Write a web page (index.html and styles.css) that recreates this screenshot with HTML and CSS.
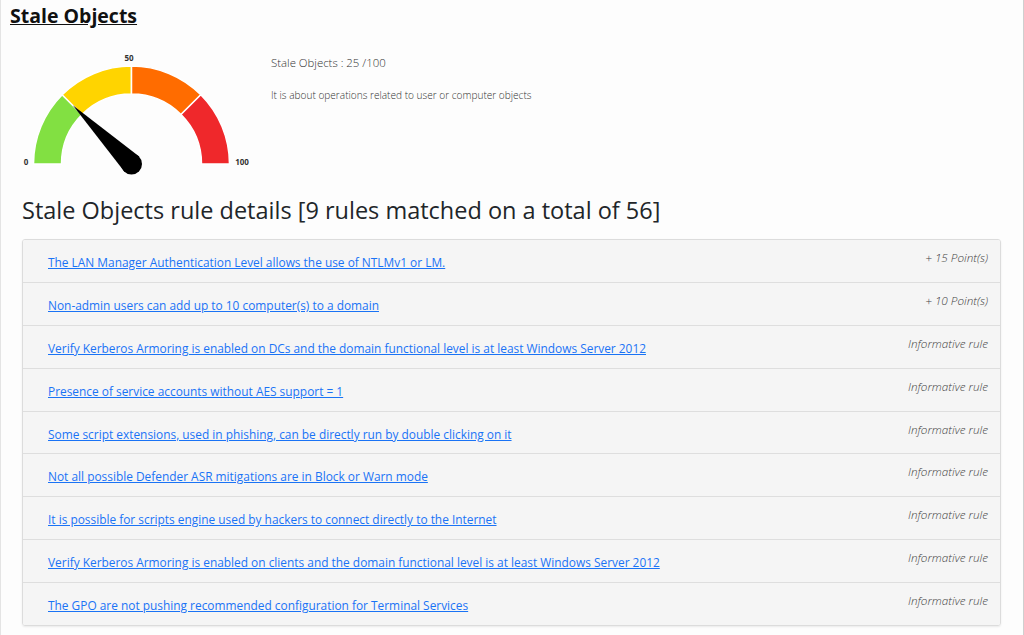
FILE: index.html
```html
<!DOCTYPE html>
<html>
<head>
<meta charset="utf-8">
<link rel="stylesheet" href="styles.css">
</head>
<body>
<div class="page">
  <h1 class="title">Stale Objects</h1>
  <div class="summary">
    <svg class="gauge" width="260" height="140" viewBox="0 0 260 140">
      <path d="M33.5 124 A98 98 0 0 1 62.2 54.7 L82 74.5 A70 70 0 0 0 61.5 124 Z" fill="#82e042" stroke="#fff" stroke-width="1.5"/>
      <path d="M62.2 54.7 A98 98 0 0 1 131.5 26 L131.5 54 A70 70 0 0 0 82 74.5 Z" fill="#ffd400" stroke="#fff" stroke-width="1.5"/>
      <path d="M131.5 26 A98 98 0 0 1 200.8 54.7 L181 74.5 A70 70 0 0 0 131.5 54 Z" fill="#ff6c00" stroke="#fff" stroke-width="1.5"/>
      <path d="M200.8 54.7 A98 98 0 0 1 229.5 124 L201.5 124 A70 70 0 0 0 181 74.5 Z" fill="#ef282b" stroke="#fff" stroke-width="1.5"/>
      <polygon points="72.8,65.3 139.2,116.4 124.1,131.3" fill="#000"/>
      <circle cx="131.5" cy="124" r="10.5" fill="#000"/>
      <text x="26" y="125" class="glabel">0</text>
      <text x="129" y="21" class="glabel">50</text>
      <text x="242" y="125" class="glabel">100</text>
    </svg>
    <div class="info">
      <p class="score">Stale Objects : 25 /100</p>
      <p class="desc">It is about operations related to user or computer objects</p>
    </div>
  </div>
  <h2 class="details">Stale Objects rule details [9 rules matched on a total of 56]</h2>
  <div class="rules">
    <div class="rule"><a href="#">The LAN Manager Authentication Level allows the use of NTLMv1 or LM.</a><span class="pts">+ 15 Point(s)</span></div>
    <div class="rule"><a href="#">Non-admin users can add up to 10 computer(s) to a domain</a><span class="pts">+ 10 Point(s)</span></div>
    <div class="rule"><a href="#">Verify Kerberos Armoring is enabled on DCs and the domain functional level is at least Windows Server 2012</a><span class="pts">Informative rule</span></div>
    <div class="rule"><a href="#">Presence of service accounts without AES support = 1</a><span class="pts">Informative rule</span></div>
    <div class="rule"><a href="#">Some script extensions, used in phishing, can be directly run by double clicking on it</a><span class="pts">Informative rule</span></div>
    <div class="rule"><a href="#">Not all possible Defender ASR mitigations are in Block or Warn mode</a><span class="pts">Informative rule</span></div>
    <div class="rule"><a href="#">It is possible for scripts engine used by hackers to connect directly to the Internet</a><span class="pts">Informative rule</span></div>
    <div class="rule"><a href="#">Verify Kerberos Armoring is enabled on clients and the domain functional level is at least Windows Server 2012</a><span class="pts">Informative rule</span></div>
    <div class="rule"><a href="#">The GPO are not pushing recommended configuration for Terminal Services</a><span class="pts">Informative rule</span></div>
  </div>
</div>
</body>
</html>
```

FILE: styles.css
```css
html, body {
  margin: 0;
  padding: 0;
}
body {
  background: #fdfdfd;
  font-family: "Open Sans", "Noto Sans", sans-serif;
  color: #212529;
}
.page {
  box-sizing: border-box;
  min-height: 635px;
  border-left: 1px solid #e4e4e4;
  border-right: 1px solid #cfcfcf;
  padding: 0 22px 0 21px;
}
.title {
  margin: 0 0 0 -12px;
  padding-top: 2px;
  font-size: 19.5px;
  font-weight: 700;
  line-height: 28px;
  text-decoration: underline;
  color: #111;
}
.summary {
  display: flex;
  margin-top: 10px;
  margin-left: -22px;
}
.gauge {
  display: block;
  flex: none;
}
.glabel {
  font-family: "Open Sans", sans-serif;
  font-size: 8px;
  font-weight: 700;
  fill: #333;
  text-anchor: middle;
}
.info {
  padding-left: 11px;
  padding-top: 14px;
}
.score {
  margin: 0;
  font-size: 11.4px;
  font-weight: 300;
  line-height: 18px;
  color: #333;
}
.desc {
  margin: 16px 0 0;
  font-size: 10.1px;
  font-weight: 300;
  line-height: 14px;
  color: #333;
}
.details {
  margin: 14px 0 13px;
  font-size: 23.5px;
  font-weight: 400;
  line-height: 32px;
  color: #212529;
}
.rules {
  border: 1px solid #dcdcdc;
  border-radius: 3px;
  box-shadow: 0 1px 2px rgba(0,0,0,0.08);
  overflow: hidden;
}
.rule {
  display: flex;
  justify-content: space-between;
  align-items: flex-start;
  height: 41.9px;
  padding: 0 12px 0 25px;
  background: #f5f5f5;
  border-bottom: 1px solid #dedede;
}
.rule:last-child {
  border-bottom: none;
}
.rule a {
  font-size: 11.9px;
  line-height: 44px;
  color: #1a73f5;
  text-decoration: underline;
}
.pts {
  padding-top: 9px;
  font-size: 11.7px;
  font-weight: 300;
  line-height: 16px;
  font-style: italic;
  color: #444;
}
```
